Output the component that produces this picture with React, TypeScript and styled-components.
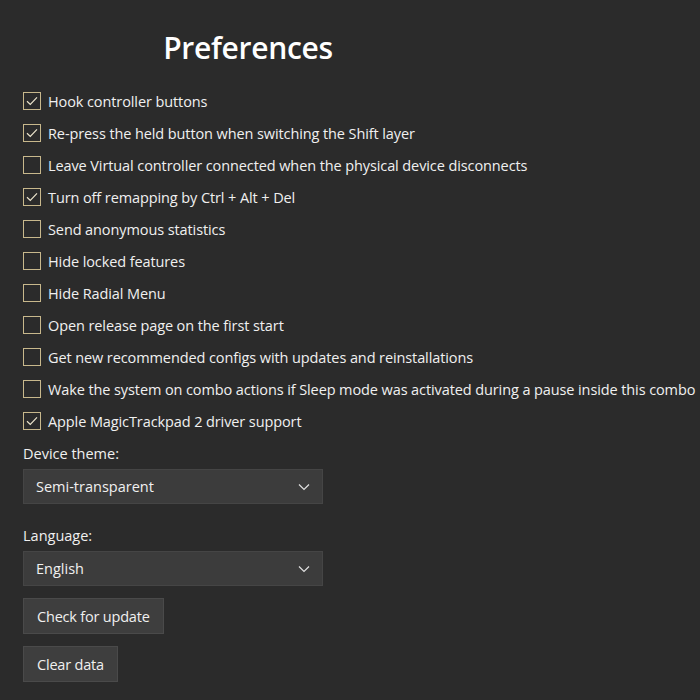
import React, { useState } from "react";
import styled, { createGlobalStyle } from "styled-components";

const GlobalStyle = createGlobalStyle`
  html, body {
    margin: 0;
    background: #2b2b2b;
  }
  body {
    font-family: "Open Sans", "Noto Sans", "Liberation Sans", sans-serif;
    color: #f0f0f0;
  }
`;

const Page = styled.div`
  width: 700px;
  height: 700px;
  box-sizing: border-box;
  padding: 26px 0 0 23px;
  overflow: hidden;
`;

const Title = styled.h1`
  width: 450px;
  margin: 0 0 15px 0;
  text-align: center;
  font-size: 30px;
  font-weight: 600;
  letter-spacing: -0.3px;
  line-height: 44px;
  color: #ffffff;
`;

const List = styled.div`
  display: flex;
  flex-direction: column;
`;

const Row = styled.label`
  display: flex;
  align-items: center;
  gap: 7px;
  height: 32px;
  font-size: 14.5px;
  letter-spacing: -0.1px;
  white-space: nowrap;
  cursor: pointer;
`;

const Box = styled.span`
  width: 18px;
  height: 18px;
  flex: none;
  box-sizing: border-box;
  border: 1px solid #c8b88c;
  display: flex;
  align-items: center;
  justify-content: center;
`;

const Field = styled.div<{ $space: number }>`
  display: flex;
  flex-direction: column;
  margin-top: 7px;
  margin-bottom: ${(p) => p.$space}px;
`;

const Caption = styled.div`
  font-size: 14.5px;
  line-height: 20px;
  margin-bottom: 5px;
`;

const Select = styled.div`
  width: 300px;
  height: 35px;
  box-sizing: border-box;
  background: #3c3c3c;
  border: 1px solid #454545;
  display: flex;
  align-items: center;
  justify-content: space-between;
  padding: 0 12px 0 12px;
  font-size: 14.5px;
`;

const Button = styled.button`
  display: block;
  height: 36px;
  box-sizing: border-box;
  padding: 0 13px;
  background: #3e3e3e;
  border: 1px solid #4a4a4a;
  color: #f0f0f0;
  font-family: inherit;
  font-size: 14.5px;
  letter-spacing: -0.2px;
  margin-bottom: 12px;
  cursor: pointer;
`;

const options = [
  { text: "Hook controller buttons", on: true },
  { text: "Re-press the held button when switching the Shift layer", on: true },
  { text: "Leave Virtual controller connected when the physical device disconnects", on: false },
  { text: "Turn off remapping by Ctrl + Alt + Del", on: true },
  { text: "Send anonymous statistics", on: false },
  { text: "Hide locked features", on: false },
  { text: "Hide Radial Menu", on: false },
  { text: "Open release page on the first start", on: false },
  { text: "Get new recommended configs with updates and reinstallations", on: false },
  { text: "Wake the system on combo actions if Sleep mode was activated during a pause inside this combo", on: false },
  { text: "Apple MagicTrackpad 2 driver support", on: true },
];

function Check({ text, on }: { text: string; on: boolean }) {
  const [checked, setChecked] = useState(on);
  return (
    <Row onClick={() => setChecked(!checked)}>
      <Box>
        {checked && (
          <svg width="12" height="10" viewBox="0 0 12 10">
            <path d="M1 5.2 L4.3 8.4 L11 1.4" fill="none" stroke="#ece4cc" strokeWidth="1.2" />
          </svg>
        )}
      </Box>
      {text}
    </Row>
  );
}

function Chevron() {
  return (
    <svg width="12" height="8" viewBox="0 0 12 8">
      <path d="M1 1.5 L6 6.5 L11 1.5" fill="none" stroke="#e0e0e0" strokeWidth="1.2" />
    </svg>
  );
}

export default function App() {
  return (
    <Page>
      <GlobalStyle />
      <Title>Preferences</Title>
      <List>
        {options.map((o) => (
          <Check key={o.text} text={o.text} on={o.on} />
        ))}
      </List>
      <Field $space={22}>
        <Caption>Device theme:</Caption>
        <Select>
          Semi-transparent
          <Chevron />
        </Select>
      </Field>
      <Field $space={12}>
        <Caption>Language:</Caption>
        <Select>
          English
          <Chevron />
        </Select>
      </Field>
      <Button>Check for update</Button>
      <Button>Clear data</Button>
    </Page>
  );
}
